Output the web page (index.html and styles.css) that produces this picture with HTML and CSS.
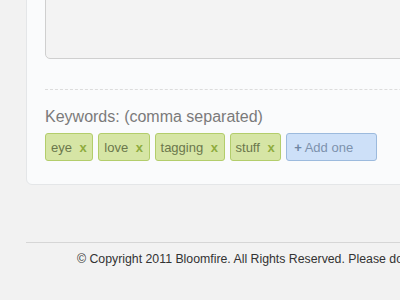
FILE: index.html
```html
<!DOCTYPE html>
<html lang="en">
<head>
    <meta charset="UTF-8">
    <title>Bloomfire - Keywords</title>
    <link rel="stylesheet" href="styles.css">
</head>
<body>
    <div class="page">
        <div class="card">
            <textarea class="description"></textarea>
            <div class="divider"></div>
            <label class="field-label">Keywords: (comma separated)</label>
            <ul class="tags">
                <li class="tag">eye <span class="remove">x</span></li>
                <li class="tag">love <span class="remove">x</span></li>
                <li class="tag">tagging <span class="remove">x</span></li>
                <li class="tag">stuff <span class="remove">x</span></li>
                <li class="add-tag"><span class="plus">+</span> Add one</li>
            </ul>
        </div>
        <footer>
            <p>&copy; Copyright 2011 Bloomfire. All Rights Reserved. Please do not reproduce without permission.</p>
        </footer>
    </div>
</body>
</html>
```

FILE: styles.css
```css
body {
    margin: 0;
    padding: 0;
    background: #f2f2f2;
    font-family: 'Liberation Sans', Arial, sans-serif;
    color: #333;
    overflow: hidden;
}

.page {
    width: 600px;
    margin-left: 26px;
}

.card {
    margin-top: -60px;
    padding: 0 18px 23px;
    background: #fafbfc;
    border: 1px solid #e4e6e8;
    border-radius: 6px;
}

.description {
    display: block;
    box-sizing: border-box;
    width: 100%;
    height: 118px;
    margin: 0;
    background: #f3f3f3;
    border: 1px solid #cfcfcf;
    border-radius: 5px;
    resize: none;
}

.divider {
    margin-top: 30px;
    border-top: 1px dashed #dcdcdc;
}

.field-label {
    display: block;
    margin-top: 18px;
    font-size: 16px;
    line-height: 18px;
    color: #7a7a7a;
}

.tags {
    display: flex;
    gap: 5px;
    list-style: none;
    margin: 7px 0 0;
    padding: 0;
}

.tag, .add-tag {
    box-sizing: border-box;
    height: 28px;
    line-height: 27px;
    font-size: 13px;
    border-radius: 3px;
}

.tag {
    padding: 0 5.5px 0 5px;
    background: #d6e5a5;
    border: 1px solid #b3cd6b;
    color: #6b774c;
}

.remove {
    margin-left: 4px;
    font-weight: bold;
    color: #8fac3e;
}

.add-tag {
    width: 91px;
    padding: 0 7px;
    background: #cde0f8;
    border: 1px solid #9cbadd;
    color: #7d92ad;
}

.plus {
    font-weight: bold;
    color: #6f86a3;
}

footer {
    margin-top: 57px;
    border-top: 1px solid #d6d6d6;
}

footer p {
    margin: 8px 0 0 51px;
    font-size: 12.3px;
    line-height: 16px;
    color: #333;
    white-space: nowrap;
}
```
